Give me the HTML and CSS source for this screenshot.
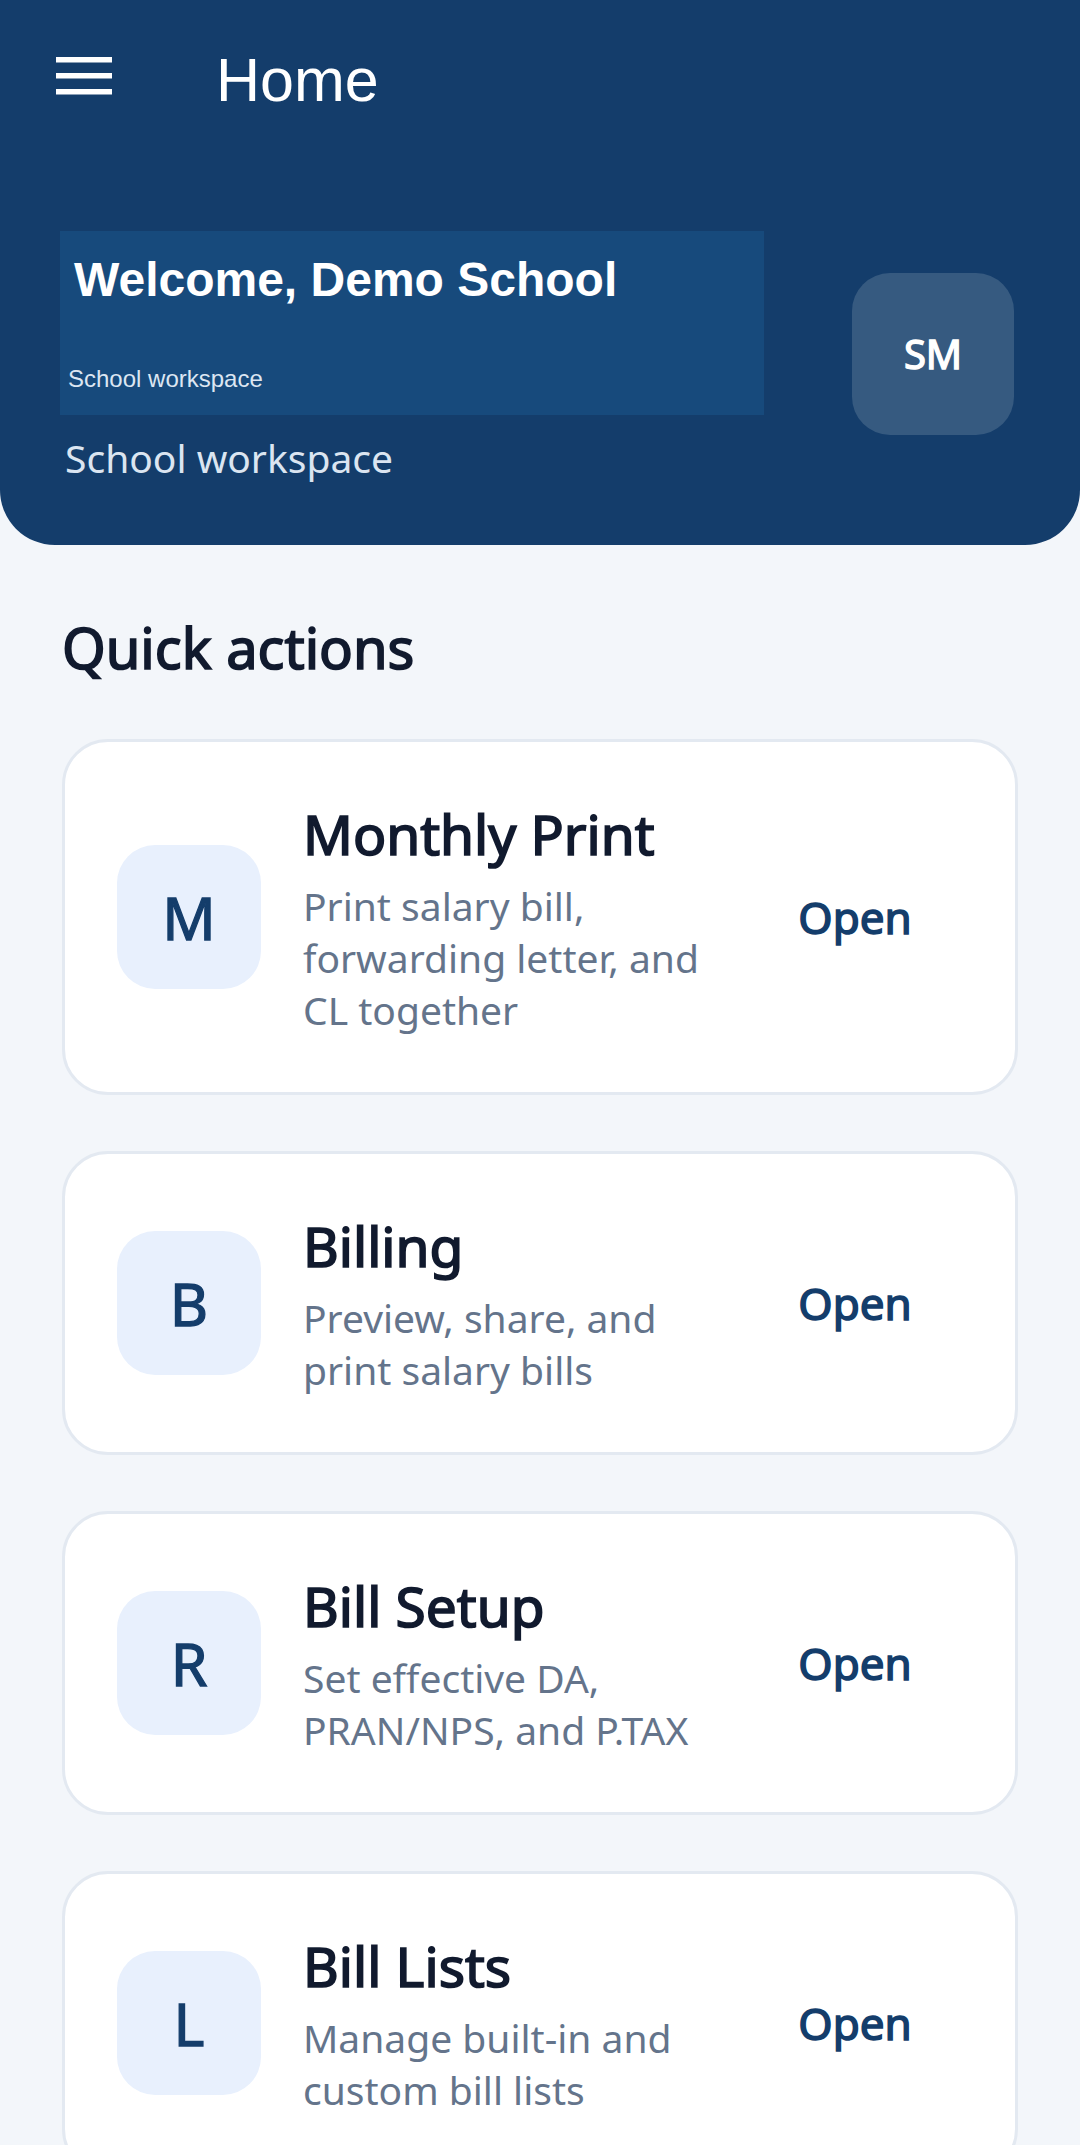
FILE: index.html
```html
<!DOCTYPE html>
<html lang="en">
<head>
    <meta charset="UTF-8">
    <meta name="viewport" content="width=device-width, initial-scale=1.0">
    <title>Home</title>
    <link rel="stylesheet" href="styles.css">
</head>
<body>
    <header class="hero">
        <div class="topbar">
            <button class="menu-btn" aria-label="Menu">
                <svg width="56" height="38" viewBox="0 0 56 38">
                    <rect x="0" y="0" width="56" height="5.5" fill="#fff"/>
                    <rect x="0" y="16" width="56" height="5.5" fill="#fff"/>
                    <rect x="0" y="32" width="56" height="5.5" fill="#fff"/>
                </svg>
            </button>
            <h1>Home</h1>
        </div>

        <div class="welcome-row">
            <div class="welcome-col">
                <div class="welcome-box">
                    <div class="welcome-title">Welcome, Demo School</div>
                    <div class="welcome-sub">School workspace</div>
                </div>
                <div class="workspace">School workspace</div>
            </div>
            <div class="avatar">SM</div>
        </div>
    </header>

    <main class="content">
        <h2>Quick actions</h2>

        <div class="action-list">
            <div class="action-card">
                <div class="action-icon">M</div>
                <div class="action-text">
                    <div class="action-title">Monthly Print</div>
                    <div class="action-desc">Print salary bill, forwarding letter, and CL together</div>
                </div>
                <button class="open-btn">Open</button>
            </div>

            <div class="action-card">
                <div class="action-icon">B</div>
                <div class="action-text">
                    <div class="action-title">Billing</div>
                    <div class="action-desc">Preview, share, and print salary bills</div>
                </div>
                <button class="open-btn">Open</button>
            </div>

            <div class="action-card">
                <div class="action-icon">R</div>
                <div class="action-text">
                    <div class="action-title">Bill Setup</div>
                    <div class="action-desc">Set effective DA, PRAN/NPS, and P.TAX</div>
                </div>
                <button class="open-btn">Open</button>
            </div>

            <div class="action-card">
                <div class="action-icon">L</div>
                <div class="action-text">
                    <div class="action-title">Bill Lists</div>
                    <div class="action-desc">Manage built-in and custom bill lists</div>
                </div>
                <button class="open-btn">Open</button>
            </div>
        </div>
    </main>
</body>
</html>
```

FILE: styles.css
```css
body {
    margin: 0;
    background-color: #f3f6fa;
    font-family: "Noto Sans", "Open Sans", sans-serif;
    color: #111a2e;
}

/* Dark blue top section */
.hero {
    background-color: #143d6b;
    border-radius: 0 0 55px 55px;
    color: #fff;
}

.topbar {
    height: 152px;
    display: flex;
    align-items: center;
    padding-left: 56px;
}

.menu-btn {
    background: none;
    border: none;
    padding: 0;
    display: flex;
}

.topbar h1 {
    margin: 8px 0 0 104px;
    font-family: "Liberation Sans", Arial, sans-serif;
    font-weight: 400;
    font-size: 61px;
}

.welcome-row {
    display: flex;
    align-items: center;
    margin-top: 79px;
    padding: 0 66px 61px 60px;
}

.welcome-box {
    width: 704px;
    height: 184px;
    box-sizing: border-box;
    background-color: #174a7c;
    font-family: "Liberation Sans", Arial, sans-serif;
    display: flex;
    flex-direction: column;
    justify-content: space-between;
    padding: 21px 0 22px 0;
}

.welcome-title {
    font-size: 48px;
    font-weight: 700;
    padding-left: 14px;
}

.welcome-sub {
    font-size: 24px;
    color: #dce6f2;
    padding-left: 8px;
}

.workspace {
    margin-top: 17px;
    padding-left: 5px;
    font-size: 39px;
    line-height: 52px;
    color: #dbe5f1;
}

.avatar {
    margin-left: auto;
    margin-bottom: 8px;
    width: 162px;
    height: 162px;
    border-radius: 38px;
    background-color: #365a80;
    display: flex;
    align-items: center;
    justify-content: center;
    font-size: 40px;
    font-weight: 400;
    -webkit-text-stroke: 1.4px currentColor;
}

/* Quick actions */
.content {
    padding: 66px 62px 0 62px;
}

/* no semibold cut of Noto Sans installed, so thicken the regular one */
.content h2,
.action-title,
.action-icon,
.open-btn {
    font-weight: 400;
    -webkit-text-stroke: 1.7px currentColor;
}

.content h2 {
    margin: 0 0 56px 0;
    font-size: 56px;
    line-height: 72px;
    color: #111a2e;
}

.action-list {
    display: flex;
    flex-direction: column;
    gap: 56px;
}

.action-card {
    background-color: #fff;
    border: 3px solid #e3e9f1;
    border-radius: 46px;
    padding: 56px 60px 56px 52px;
    display: flex;
    align-items: center;
}

.action-icon {
    flex: none;
    width: 144px;
    height: 144px;
    border-radius: 38px;
    background-color: #e8f0fd;
    color: #143d6b;
    display: flex;
    align-items: center;
    justify-content: center;
    font-size: 59px;
    -webkit-text-stroke-width: 1.3px;
}

.action-text {
    flex: 1;
    margin-left: 42px;
    margin-right: 18px;
}

.action-title {
    font-size: 55px;
    line-height: 72px;
    color: #111a2e;
}

.action-desc {
    margin-top: 10px;
    font-size: 39px;
    line-height: 52px;
    color: #64748b;
}

.open-btn {
    flex: none;
    width: 200px;
    background: none;
    border: none;
    font-family: "Noto Sans", "Open Sans", sans-serif;
    font-size: 44px;
    color: #143d6b;
    padding: 0;
    -webkit-text-stroke-width: 1.5px;
}
```
